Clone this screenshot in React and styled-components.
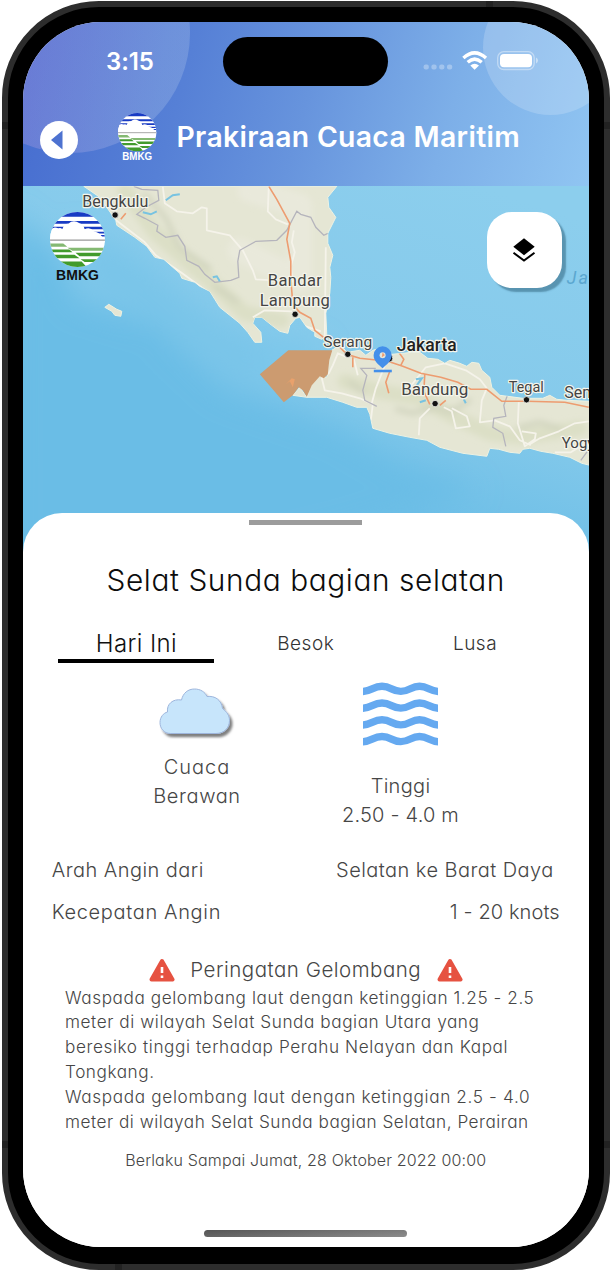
import React from "react";
import styled, { createGlobalStyle } from "styled-components";

const GlobalStyle = createGlobalStyle`
  *, *::before, *::after { box-sizing: border-box; }
  body { margin: 0; background: #fff; overflow: hidden; }
`;

const Page = styled.main`
  width: 611px;
  height: 1270px;
  padding: 1px 0 0 2px;
  overflow: hidden;
  font-family: Inter, "Liberation Sans", sans-serif;
`;

const Phone = styled.div`
  position: relative;
  width: 607.5px;
  height: 1269px;
  padding: 15px 15px 16px;
  border: 6px solid #2d2d2d;
  border-radius: 97px;
  background: #000;
`;

const Antenna = styled.i`
  position: absolute;
  background: #222;
  width: ${(p) => (p.$side ? 6 : 7)}px;
  height: ${(p) => (p.$side ? 7 : 6)}px;
  left: ${(p) => p.$x}px;
  top: ${(p) => p.$y}px;
`;

const Screen = styled.div`
  display: flex;
  flex-direction: column;
  width: 565.5px;
  height: 1225px;
  overflow: hidden;
  border-radius: 78px;
  background: #fff;
`;

const Header = styled.header`
  position: relative;
  flex: none;
  height: 163.5px;
  overflow: hidden;
  background: linear-gradient(106deg, #456bcf 0%, #5680d6 29%, #6794dd 50%, #7dafe8 74%, #90c5f2 100%);
  color: #fff;
`;

const Bubble = styled.span`
  position: absolute;
  border-radius: 50%;
  left: ${(p) => p.$x}px;
  top: ${(p) => p.$y}px;
  width: ${(p) => p.$size}px;
  height: ${(p) => p.$size}px;
  background: ${(p) => p.$fill};
`;

const StatusBar = styled.div`
  position: relative;
  display: flex;
  align-items: center;
  height: 78px;
  padding: 0 48px 0 83px;
`;

const Clock = styled.span`
  width: 117px;
  font-size: 24px;
  font-weight: 600;
  letter-spacing: -0.1px;
`;

const Island = styled.div`
  width: 165px;
  height: 49px;
  margin-right: 35px;
  border-radius: 25px;
  background: #000;
`;

const TitleBar = styled.div`
  position: relative;
  display: flex;
  align-items: flex-start;
  padding: 12px 0 0 17px;
`;

const BackButton = styled.button`
  display: grid;
  place-items: center;
  width: 38px;
  height: 38px;
  margin-top: 9px;
  padding: 0;
  border: 0;
  border-radius: 50%;
  background: #fff;
`;

const HeaderLogo = styled.div`
  margin: 1px 0 0 39.5px;
  line-height: 0;
`;

const AppTitle = styled.h1`
  margin: 8px 0 0 20.5px;
  font-size: 28.3px;
  line-height: 34px;
  font-weight: 600;
  letter-spacing: 0.35px;
  white-space: nowrap;
`;

const MapArea = styled.section`
  position: relative;
  flex: none;
  height: 327px;
  z-index: 0;
`;

const MapSvg = styled.svg`
  display: block;
  width: 565.5px;
  height: 369.5px;
`;

const MapLogo = styled.div`
  position: absolute;
  left: 26.5px;
  top: 26px;
`;

const LayerButton = styled.button`
  position: absolute;
  right: 26.5px;
  top: 26.5px;
  display: grid;
  place-items: center;
  width: 75.5px;
  height: 75.5px;
  padding: 0;
  border: 0;
  border-radius: 25px;
  background: #fff;
  box-shadow: 4px 4px 1.5px rgba(35, 85, 110, 0.48);
`;

const Sheet = styled.section`
  position: relative;
  display: flex;
  flex-direction: column;
  flex: 1;
  align-items: center;
  border-radius: 39px 39px 0 0;
  background: #fff;
  color: #464646;
  z-index: 1;
  font-weight: 300;
  font-feature-settings: "cv11" 1;
`;

const Handle = styled.div`
  width: 113px;
  height: 5.5px;
  margin-top: 7px;
  background: #9c9c9c;
`;

const Line = styled.span`
  display: block;
  white-space: nowrap;
  letter-spacing: ${(p) => p.$ls || 0}px;
`;

const Place = styled.h2`
  margin: 35px 0 0;
  color: #0c0c0c;
  font-size: 29.8px;
  line-height: 40px;
  font-weight: 300;
`;

const Tabs = styled.nav`
  display: grid;
  grid-template-columns: repeat(3, 169.3px);
  margin-top: 28.5px;
  font-feature-settings: normal;
`;

const Tab = styled.div`
  display: flex;
  align-items: center;
  justify-content: center;
  justify-self: center;
  width: 156px;
  height: 34.5px;
  padding-bottom: 1px;
  border-bottom: 4px solid ${(p) => (p.$active ? "#000" : "transparent")};
  color: ${(p) => (p.$active ? "#111" : "#333")};
  font-size: ${(p) => (p.$active ? 24 : 19)}px;
`;

const Metrics = styled.div`
  display: grid;
  grid-template-columns: 203.5px 203.5px;
  width: 407px;
  height: 153px;
  margin: 18px 14px 0 0;
  font-size: 20px;
  line-height: 29px;
  text-align: center;
`;

const Metric = styled.div`
  display: flex;
  flex-direction: column;
  align-items: center;
  padding-top: ${(p) => p.$top}px;

  svg {
    display: block;
    margin-bottom: ${(p) => p.$gap}px;
  }
`;

const WindRows = styled.dl`
  width: 508px;
  margin: 15px 0 0;
  font-size: 20px;
`;

const WindRow = styled.div`
  display: flex;
  justify-content: space-between;
  height: 42px;
  padding-right: ${(p) => p.$inset || 0}px;
  line-height: 42px;

  dd { margin: 0; }
`;

const WarningTitle = styled.div`
  display: flex;
  align-items: center;
  justify-content: space-between;
  width: 314px;
  height: 30px;
  margin-top: 21.5px;
  font-size: 20.5px;
`;

const WarningText = styled.div`
  align-self: flex-start;
  margin: 1px 0 0 42px;
  font-size: 17.2px;
  line-height: 24.95px;
`;

const Validity = styled.div`
  margin-top: 15px;
  font-size: 16px;
  line-height: 20px;
`;

const HomeBar = styled.div`
  width: 203px;
  height: 7px;
  margin-top: auto;
  margin-bottom: 10px;
  border-radius: 4px;
  background: linear-gradient(175deg, #555, #8c8c8c);
`;

function BmkgLogo({ size, id, ink, textSize }) {
  const height = size * 1.3;
  return (
    <svg width={size} height={height} viewBox="0 0 54 70.2" overflow="visible">
      <defs>
        <clipPath id={id}><circle cx="27" cy="27" r="27" /></clipPath>
      </defs>
      <g clipPath={`url(#${id})`}>
        <rect width="54" height="54" fill="#fff" />
        <path d="M0 0H54V4.6H0zM0 8.8H54V11.6H0zM0 14.5H54V17H0zM40 19.4H54V21.2H44zM46 22.6H54V24H48z" fill="#183bc4" />
        <path d="M0 29V18Q3 14 8 16Q11 15 12 17Q14 11 18 11.5Q23 7 29 11Q33 12 34 17Q39 14 43 19Q48 20 51 24L54 27V30z" fill="#fff" />
        <path d="M0 27.6H54" stroke="#999" strokeWidth="1.2" />
        <path d="M0 31H13L17 34.2H0zM17 35H54V38H22z" fill="#84b972" />
        <path d="M0 36.7H19L22 39.6H0zM25 40H54V43.5H29zM0 42H24L29 45.3H0zM30 46.4H54V49H34zM0 48.5H31L36 54H0z" fill="#429b2c" />
      </g>
      <text x="27" y="66.6" textAnchor="middle" textLength="42" lengthAdjust="spacingAndGlyphs" fill={ink}
        fontFamily="Liberation Sans, sans-serif" fontWeight="700" fontSize={textSize}>BMKG</text>
    </svg>
  );
}

const SUMATRA = "M84 186L100 197L116 220L117 225L135 237L147 246L155 257L164 259L173 267L180 273L182 278L195 282L200 286L210 291L215 299L220 307L230 315L240 323L248 332L255 342L262 342L261 332L253 323L255 317L262 317L272 325L280 331L288 333L290 325L296 318L300 317L307 327L315 332L315 336L322 339L327 335L326 313L330 293L331 277L330 267L333 255L328 243L328 233L336 217L329 207L328 197L337 186Z";
const JAVA = "M332 350L337 347L343 347L347 352L360 350L366 355L373 350L380 348L392 354L403 353L412 352L420 352L428 358L438 359L445 363L450 360L460 363L467 366L472 362L479 363L482 370L490 377L492 387L500 395L523 398L543 398L550 395L557 399L567 400L590 401V465L582 463L570 457L553 453L541 451L530 448L523 449L520 453L510 452L499 449L490 448L487 456L463 453L440 447L427 440L410 437L390 433L373 428L370 414L367 407L357 407L343 402L327 397L307 397L293 395L300 387L307 397L312 383L318 375L327 377L328 372L329 360Z";

function City({ x, y, w, size = 16, bold, children }) {
  return (
    <text x={x} y={y} textLength={w} fontSize={size} fontWeight={bold ? 500 : 400}
      fill={bold ? "#222" : "#444"}>{children}</text>
  );
}

function WeatherMap() {
  return (
    <MapSvg viewBox="23.2 185.7 565.5 369.5">
      <defs>
        <linearGradient id="sea" x1="0.8" y1="0" x2="0.3" y2="1">
          <stop offset="0" stopColor="#8cceed" />
          <stop offset="0.45" stopColor="#85caeb" />
          <stop offset="0.75" stopColor="#6ebfe7" />
          <stop offset="1" stopColor="#68bbe7" />
        </linearGradient>
        <filter id="soft" x="-30%" y="-30%" width="160%" height="160%"><feGaussianBlur stdDeviation="14" /></filter>
        <filter id="relief" x="-30%" y="-30%" width="160%" height="160%"><feGaussianBlur stdDeviation="3" /></filter>
        <clipPath id="land"><path d={SUMATRA} /><path d={JAVA} /></clipPath>
      </defs>
      <rect x="23" y="185" width="567" height="371" fill="url(#sea)" />
      <g filter="url(#soft)">
        <path d="M10 210L65 260L75 300L155 325L225 390L340 430L400 465L480 490L350 530L230 560H10z" fill="#6bbde6" />
        <path d="M70 230L130 250L220 325L290 360L250 390L150 320L90 290z" fill="#79c5e9" />
        <path d="M255 342L320 345V390L262 376z" fill="#7bc7eb" />
      </g>
      <g fill="#e5e6d4" stroke="#edf2e3" strokeWidth="1">
        <path d={SUMATRA} />
        <path d={JAVA} />
        <path d="M105 307L109 304L117 309L122 311L121 316L115 315L112 311z" />
      </g>
      <g clipPath="url(#land)">
        <g filter="url(#relief)" fill="none" strokeLinecap="round" strokeLinejoin="round">
          <path d="M125 190L155 232L186 260L215 285L245 313L282 320M345 381L380 391L420 398L455 417L490 433L520 437L580 428" stroke="#dcdfc6" strokeWidth="15" />
          <path d="M145 194L166 218L180 247L210 268M215 286L237 301M397 409L413 413L435 407L450 412L470 400M520 427L540 422L560 428M350 382L364 392" stroke="#ced1bb" strokeWidth="4" />
          <path d="M250 190L300 205V280L240 250" stroke="#e9e9db" strokeWidth="24" />
        </g>
        <g fill="none" stroke="#f5f3ea" strokeWidth="1.8" strokeLinejoin="round">
          <path d="M115 219L145 242L156 255L181 272L207 291M163 186L165 203L177 211L193 213L202 207L207 208V230L230 235L243 250L253 270L256 279L274 280M269 186L268 211L276 219L288 224M294 230L292 242L295 252L291 266L293 282M253 317L265 310L292 311L303 325L321 331M326 247L325 337" />
          <path d="M348 357L338 353L333 365L329 373L322 378L325 390L342 393L360 398L373 404L371 420M354 359L358 375M385 365L376 388L372 403M410 387L426 367L445 363L466 370L480 379L487 388M430 408L420 418L419 435M444 407L452 411L456 428L470 426L467 416L452 408M487 388L482 400L480 422L495 420L510 426L520 440L531 445M519 402L518 423L525 446L535 439L536 433L522 431M530 444L540 438L559 431L575 423L589 421M555 452L571 452L589 441" />
        </g>
        <path d="M134 186L142 189L158 190L159 200L146 207L137 214L145 218L158 225L157 231L166 237L178 235L185 246L187 260L199 266L205 274L215 282L231 280L239 277L238 261L240 250L256 241L277 240L287 230L297 211L301 214L311 217L316 227L324 235L328 233M376 368L361 368L367 375L363 390L365 400L377 406M508 394L504 405L506 416L494 418L493 427L503 433L506 446M589 449L581 460" fill="none" stroke="#b5b4bc" strokeWidth="1.3" />
        <g fill="none" stroke="#ed9c70" strokeWidth="1.6">
          <path d="M269 186L277 199L290 223L287 239L291 261V279L292 291L293 304L300 312L311 318L315 330L325 338M339 346L347 354L360 358L379 360L391 362L403 366L421 373L441 377L458 382L471 389L487 389L502 401L527 401L565 402L589 407M353 357L353 367M399 352L404 359L401 365M390 371L386 382L389 393M425 374L424 391L430 404M440 405L446 400M121 219L126 213" />
        </g>
        <path d="M166 200L173 195L180 194M143 212L151 214L157 211M213 277L217 276L220 281M416 379L422 378L417 385M420 402L426 400M464 399L466 403" fill="none" stroke="#78c3e1" strokeWidth="2" />
      </g>
      <path d="M288.5 350H332.5L329.5 360L328 374L324 378L320 376L312 385L307 396.5L303 390L299 387L293 395L284 402L260 374z" fill="#cc9b70" />
      <path d="M292 378L295 379L293 387L290 381L286 384z" fill="#e9a16c" />
      <g fill="#111" stroke="#f5f5ed" strokeWidth="0.8">
        {[[115.3, 214.7], [295.3, 314], [348, 354], [435.3, 403.3], [526.7, 399.5]].map(([x, y]) => (
          <circle key={x} cx={x} cy={y} r="3.2" />
        ))}
        <circle cx="389" cy="358" r="4" />
      </g>
      <path d="M382.8 346A9 9 0 0 0 373.8 355C373.8 361 379 364.5 382.8 368C386.5 364.5 391.8 361 391.8 355A9 9 0 0 0 382.8 346z" fill="#438fea" />
      <circle cx="382.8" cy="355" r="3" fill="#e4e6dc" />
      <path d="M382.8 352L385 355L382 357z" fill="#ed9c70" />
      <path d="M374 370.7H392" stroke="#438fea" strokeWidth="2.6" />
      <g fontFamily="Roboto, Liberation Sans, sans-serif" stroke="#f5f5ec" strokeWidth="2.4" strokeLinejoin="round" paintOrder="stroke">
        <City x={82.5} y={207} w={66}>Bengkulu</City>
        <City x={268} y={286} w={54} size={16.5}>Bandar</City>
        <City x={260} y={305.5} w={70} size={16.5}>Lampung</City>
        <City x={323.5} y={346.5} w={49} size={15.5}>Serang</City>
        <City x={397} y={351} w={60} size={17.5} bold>Jakarta</City>
        <City x={401.5} y={395} w={67} size={17}>Bandung</City>
        <City x={509} y={392} w={35} size={14.5}>Tegal</City>
        <City x={564.5} y={398} size={16}>Semarang</City>
        <City x={562} y={448} size={15}>Yogyakarta</City>
      </g>
      <text x="567" y="284" fontFamily="Roboto, Liberation Sans, sans-serif" fontStyle="italic" fontSize="18" letterSpacing="2" fill="#5ba7d0">Java</text>
    </MapSvg>
  );
}

function WarningIcon() {
  return (
    <svg width="26" height="24" viewBox="0 0 26 24">
      <path d="M13 3L23.5 21.5H2.5z" fill="#e65241" stroke="#e65241" strokeWidth="4" strokeLinejoin="round" />
      <path d="M13 9V15M13 17.5V20" stroke="#fff" strokeWidth="2.6" />
    </svg>
  );
}

function Cloud() {
  const shape = "M11.5 45.5C5 45.5 1 40.5 1 34.5C1 29 4.5 25 8.5 24C7.5 16 14 10.5 22.5 12C24 5 29 1 35.5 1C41.5 1 46 4 48 8.5C56 7.5 62.5 12 63.5 20.5C68 24 70.5 27.5 70.5 32.5C70.5 40 65 45.5 57 45.5Z";
  return (
    <svg width="76" height="51" viewBox="0 0 76 51" overflow="visible">
      <defs>
        <filter id="cloudShadow" x="-20%" y="-20%" width="150%" height="150%">
          <feDropShadow dx="2.5" dy="3.2" stdDeviation="1" floodColor="#000" floodOpacity="0.5" />
        </filter>
      </defs>
      <path d={shape} fill="#c7e5fb" stroke="#9db5dc" strokeWidth="1" filter="url(#cloudShadow)" />
    </svg>
  );
}

function Waves() {
  return (
    <svg width="75.5" height="64" viewBox="0 0 75.5 64" overflow="hidden">
      {[0, 16.75, 33.5, 50.25].map((y) => (
        <path key={y} transform={`translate(0 ${y})`} d="M-1 9.6C8.5 9.2 10 4.3 19 4.3S29 9.4 37.8 9.4S48 4.3 56.5 4.3S67 9.2 76.5 9.6"
          fill="none" stroke="#65a9f0" strokeWidth="7.4" />
      ))}
    </svg>
  );
}

function StatusIcons() {
  return (
    <svg width="116" height="20" viewBox="424 51 116 20" overflow="visible">
      <g fill="#fff" fillOpacity="0.3">
        {[427.2, 435, 442.8, 450.6].map((x) => <rect key={x} x={x - 2.6} y="64.4" width="5.2" height="5.2" rx="2" />)}
      </g>
      <g fill="none" stroke="#fff" strokeWidth="3.4">
        <path d="M464.4 58Q475.6 47.8 487 58" />
        <path d="M468.7 62.3Q475.6 56 482.7 62.3" />
      </g>
      <path d="M471.3 65.5Q475.6 62 480 65.5L475.6 69.8z" fill="#fff" />
      <rect x="498.7" y="51.7" width="36.5" height="17.8" rx="6" fill="none" stroke="#fff" strokeOpacity="0.4" strokeWidth="1.3" />
      <rect x="501" y="54" width="32" height="13.2" rx="4" fill="#fff" />
      <path d="M537 57.5Q539 58.5 539 60.5T537 63.5z" fill="#fff" fillOpacity="0.45" />
    </svg>
  );
}

const warningLines = [
  ["Waspada gelombang laut dengan ketinggian 1.25 - 2.5", 0.57],
  ["meter di wilayah Selat Sunda bagian Utara yang", 0.57],
  ["beresiko tinggi terhadap Perahu Nelayan dan Kapal", 0.59],
  ["Tongkang.", 0.55],
  ["Waspada gelombang laut dengan ketinggian 2.5 - 4.0", 0.64],
  ["meter di wilayah Selat Sunda bagian Selatan, Perairan", 0.51],
];

export default function App() {
  return (
    <Page>
      <GlobalStyle />
      <Phone>
        <Antenna $side $x={-6} $y={115} />
        <Antenna $side $x={595.5} $y={115} />
        <Antenna $side $x={-6} $y={1134} />
        <Antenna $side $x={595.5} $y={1134} />
        <Antenna $x={478} $y={-6} />
        <Antenna $x={107} $y={1257} />
        <Screen>
          <Header>
            <Bubble $x={-73} $y={-109} $size={240} $fill="linear-gradient(100deg, rgba(180,155,225,.32) 35%, rgba(205,220,240,.22) 85%)" />
            <Bubble $x={459.5} $y={-42} $size={135} $fill="rgba(255,255,255,.18)" />
            <StatusBar>
              <Clock>3:15</Clock>
              <Island />
              <StatusIcons />
            </StatusBar>
            <TitleBar>
              <BackButton aria-label="Kembali">
                <svg width="38" height="38" viewBox="0 0 38 38"><path d="M11 19L22.5 9.5V28.5z" fill="#4d72d0" /></svg>
              </BackButton>
              <HeaderLogo><BmkgLogo size={38.5} id="logoHeader" ink="#fff" textSize={14.5} /></HeaderLogo>
              <AppTitle>Prakiraan Cuaca Maritim</AppTitle>
            </TitleBar>
          </Header>
          <MapArea>
            <WeatherMap />
            <MapLogo><BmkgLogo size={55} id="logoMap" ink="#111" textSize={13.5} /></MapLogo>
            <LayerButton aria-label="Layer">
              <svg width="24" height="26" viewBox="0 0 24 26">
                <path d="M12 1.3L22.7 9.8L12 18.2L1.3 9.8z" fill="#000" />
                <path d="M1.5 15.8L12 23.5L22.5 15.8" fill="none" stroke="#000" strokeWidth="2" />
              </svg>
            </LayerButton>
          </MapArea>
          <Sheet>
            <Handle />
            <Place><Line $ls={0.6}>Selat Sunda bagian selatan</Line></Place>
            <Tabs>
              <Tab $active><Line $ls={0.4}>Hari Ini</Line></Tab>
              <Tab><Line $ls={0.5}>Besok</Line></Tab>
              <Tab><Line $ls={0.5}>Lusa</Line></Tab>
            </Tabs>
            <Metrics>
              <Metric $top={6.5} $gap={14.5}>
                <Cloud />
                <Line $ls={0.95}>Cuaca</Line>
                <Line $ls={0.6}>Berawan</Line>
              </Metric>
              <Metric $top={1} $gap={26}>
                <Waves />
                <Line $ls={0.3}>Tinggi</Line>
                <Line $ls={0.2}>2.50 - 4.0 m</Line>
              </Metric>
            </Metrics>
            <WindRows>
              <WindRow $inset={6}>
                <dt><Line $ls={0.45}>Arah Angin dari</Line></dt>
                <dd><Line $ls={0.45}>Selatan ke Barat Daya</Line></dd>
              </WindRow>
              <WindRow>
                <dt><Line $ls={0.65}>Kecepatan Angin</Line></dt>
                <dd><Line $ls={0.1}>1 - 20 knots</Line></dd>
              </WindRow>
            </WindRows>
            <WarningTitle>
              <WarningIcon />
              <Line $ls={0.5}>Peringatan Gelombang</Line>
              <WarningIcon />
            </WarningTitle>
            <WarningText>
              {warningLines.map(([text, ls]) => <Line key={text} $ls={ls}>{text}</Line>)}
            </WarningText>
            <Validity><Line $ls={0.16}>Berlaku Sampai Jumat, 28 Oktober 2022 00:00</Line></Validity>
            <HomeBar />
          </Sheet>
        </Screen>
      </Phone>
    </Page>
  );
}
